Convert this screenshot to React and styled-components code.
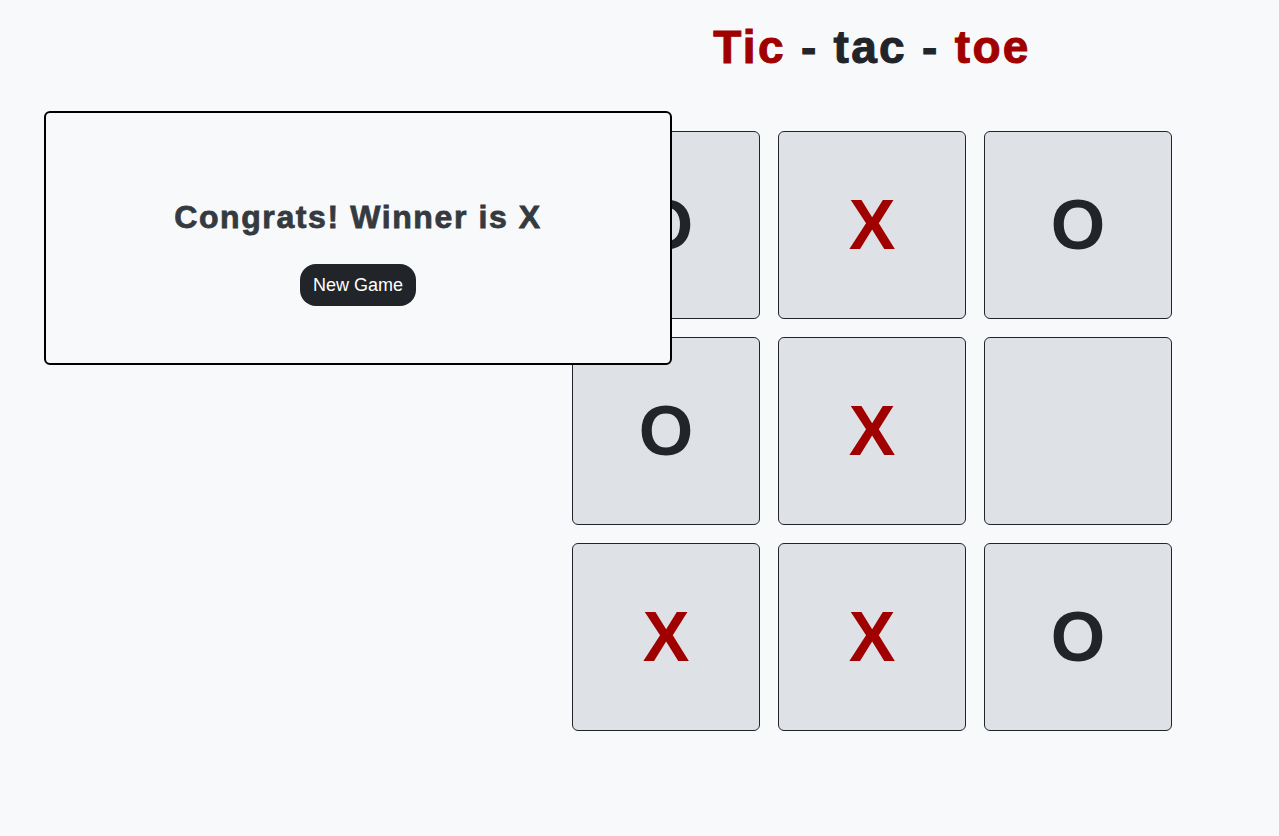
import React from "react";
import styled, { createGlobalStyle } from "styled-components";

const GlobalStyle = createGlobalStyle`
  html, body { margin: 0; padding: 0; background: #f8f9fa; }
  body { font-family: "Liberation Sans", Arial, sans-serif; color: #212529; }
  * { box-sizing: border-box; }
`;

const Page = styled.div`
  position: relative;
  width: 1279px;
  min-height: 836px;
  padding-top: 20px;
  padding-left: 572px;
`;

const Board = styled.div`
  width: 600px;
  display: flex;
  flex-direction: column;
  align-items: center;
`;

const Title = styled.h1`
  margin: 0;
  font-size: 46px;
  line-height: 55px;
  font-weight: 700;
  letter-spacing: 0.05em;
  -webkit-text-stroke: 1px currentColor;
  color: #212529;
  white-space: pre;
`;

const Word = styled.span`
  color: ${(p) => (p.$red ? "#a00000" : "#212529")};
`;

const Grid = styled.div`
  margin-top: 56px;
  display: grid;
  grid-template-columns: repeat(3, 188px);
  grid-auto-rows: 188px;
  column-gap: 18px;
  row-gap: 18px;
  width: 600px;
`;

const Cell = styled.div`
  background: #dee2e6;
  border: 1px solid #212529;
  border-radius: 6px;
  display: flex;
  align-items: center;
  justify-content: center;
  font-size: 70px;
  font-weight: 700;
  color: ${(p) => (p.$mark === "X" ? "#a00000" : "#212529")};
`;

const Modal = styled.div`
  position: absolute;
  left: 44px;
  top: 111px;
  width: 628px;
  height: 254px;
  background: #f8f9fa;
  border: 2px solid #000;
  border-radius: 6px;
  display: flex;
  flex-direction: column;
  align-items: center;
  padding-top: 85px;
`;

const Message = styled.h2`
  margin: 0;
  font-size: 32px;
  line-height: 38px;
  font-weight: 700;
  letter-spacing: 0.05em;
  -webkit-text-stroke: 0.8px currentColor;
  color: #343a40;
`;

const Button = styled.button`
  margin-top: 28px;
  height: 42px;
  padding: 0 13px;
  border: none;
  border-radius: 16px;
  background: #212529;
  color: #ffffff;
  font-family: "Liberation Sans", Arial, sans-serif;
  font-size: 18px;
  cursor: pointer;
`;

const cells = ["O", "X", "O", "O", "X", "", "X", "X", "O"];

export default function App() {
  return (
    <>
      <GlobalStyle />
      <Page>
        <Board>
          <Title>
            <Word $red>Tic</Word> - <Word>tac</Word> - <Word $red>toe</Word>
          </Title>
          <Grid>
            {cells.map((c, i) => (
              <Cell key={i} $mark={c}>
                {c}
              </Cell>
            ))}
          </Grid>
        </Board>
        <Modal>
          <Message>Congrats! Winner is X</Message>
          <Button>New Game</Button>
        </Modal>
      </Page>
    </>
  );
}
